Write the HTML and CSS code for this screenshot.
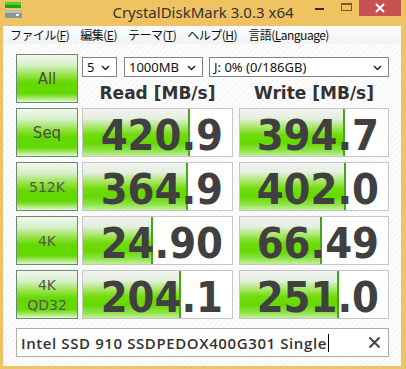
FILE: index.html
```html
<!DOCTYPE html>
<html lang="ja">
<head>
    <meta charset="UTF-8">
    <meta name="viewport" content="width=device-width, initial-scale=1.0">
    <title>CrystalDiskMark 3.0.3 x64</title>
    <link rel="stylesheet" href="styles.css">
</head>
<body>
    <div class="window">
        <header class="titlebar">
            <svg class="app-icon" width="17" height="16" viewBox="0 0 17 16">
                <rect x="0" y="0" width="16" height="3" fill="#4fcf2a"/>
                <rect x="0" y="3" width="16" height="3" fill="#2a9a1a"/>
                <rect x="0" y="8" width="17" height="8" rx="1" fill="#8c9499"/>
                <rect x="0" y="8" width="17" height="3" fill="#b7bec2"/>
                <rect x="11" y="12" width="3" height="2" fill="#ffffff"/>
            </svg>
            <div class="title">CrystalDiskMark 3.0.3 x64</div>
            <div class="controls">
                <span class="ctl-min"></span>
                <span class="ctl-max"></span>
                <span class="ctl-close">
                    <svg width="10" height="10" viewBox="0 0 10 10">
                        <path d="M1 1 L9 9 M9 1 L1 9" stroke="#fff" stroke-width="2"/>
                    </svg>
                </span>
            </div>
        </header>

        <div class="frame">
            <nav class="menubar">
                <span>ファイル(<u>F</u>)</span>
                <span>編集(<u>E</u>)</span>
                <span>テーマ(<u>T</u>)</span>
                <span>ヘルプ(<u>H</u>)</span>
                <span>言語(<u>L</u>anguage)</span>
            </nav>

            <main class="panel">
                <div class="grid">
                    <div class="test-btn casual">All</div>
                    <div class="top-right">
                        <div class="selects">
                            <div class="select sel-count">5<svg class="chev" width="9" height="6" viewBox="0 0 9 6"><path d="M1 1 L4.5 4.5 L8 1" fill="none" stroke="#222" stroke-width="1.5"/></svg></div>
                            <div class="select sel-size">1000MB<svg class="chev" width="9" height="6" viewBox="0 0 9 6"><path d="M1 1 L4.5 4.5 L8 1" fill="none" stroke="#222" stroke-width="1.5"/></svg></div>
                            <div class="select sel-drive">J: 0% (0/186GB)<svg class="chev" width="9" height="6" viewBox="0 0 9 6"><path d="M1 1 L4.5 4.5 L8 1" fill="none" stroke="#222" stroke-width="1.5"/></svg></div>
                        </div>
                        <div class="heads">
                            <div>Read [MB/s]</div>
                            <div>Write [MB/s]</div>
                        </div>
                    </div>

                    <div class="test-btn casual">Seq</div>
                    <div class="cell"><span class="fill" style="width:107px"></span><span class="val">420.9</span></div>
                    <div class="cell write"><span class="fill" style="width:105px"></span><span class="val">394.7</span></div>

                    <div class="test-btn">512K</div>
                    <div class="cell"><span class="fill" style="width:105px"></span><span class="val">364.9</span></div>
                    <div class="cell write"><span class="fill" style="width:106px"></span><span class="val">402.0</span></div>

                    <div class="test-btn">4K</div>
                    <div class="cell"><span class="fill" style="width:70px"></span><span class="val">24.90</span></div>
                    <div class="cell write"><span class="fill" style="width:82px"></span><span class="val">66.49</span></div>

                    <div class="test-btn two-line">4K<br>QD32</div>
                    <div class="cell"><span class="fill" style="width:98px"></span><span class="val">204.1</span></div>
                    <div class="cell write"><span class="fill" style="width:99px"></span><span class="val">251.0</span></div>
                </div>

                <div class="comment">
                    <span class="comment-text">Intel SSD 910 SSDPEDOX400G301 Single</span><span class="caret"></span>
                    <svg class="clear" width="13" height="13" viewBox="0 0 13 13">
                        <path d="M1.5 1.5 L11.5 11.5 M11.5 1.5 L1.5 11.5" stroke="#444" stroke-width="2"/>
                    </svg>
                </div>
            </main>
        </div>
    </div>
</body>
</html>
```

FILE: styles.css
```css
*,
*::after,
*::before{
    box-sizing: border-box;
    margin: 0;
    padding: 0;
}
body{
    width: 406px;
    height: 369px;
    overflow: hidden;
    font-family: "Noto Sans", "DejaVu Sans", sans-serif;
}
.window{
    display: flex;
    flex-direction: column;
    width: 406px;
    height: 369px;
    background-color: #efc262;
}

/* barra de titulo */
.titlebar{
    display: grid;
    grid-template-columns: 1fr auto 1fr;
    height: 26px;
    color: #333;
}
.app-icon{
    margin: 2px 0 0 5px;
}
.title{
    font-size: 15px;
    line-height: 24px;
}
.controls{
    display: flex;
    align-items: flex-start;
    justify-self: end;
    margin-right: 5px;
}
.ctl-min{
    width: 9px;
    height: 2px;
    margin: 8px 17px 0 0;
    background-color: #2b2b2b;
}
.ctl-max{
    width: 11px;
    height: 8px;
    margin: 3px 7px 0 0;
    border: 1px solid #6e5d3c;
    border-top-width: 2px;
}
.ctl-close{
    display: flex;
    align-items: center;
    justify-content: center;
    width: 42px;
    height: 16px;
    background-color: #c75050;
}

.frame{
    display: flex;
    flex-direction: column;
    flex-grow: 1;
    margin: 0 5px 3px 3px;
}
.menubar{
    display: flex;
    gap: 11px;
    height: 18px;
    padding-left: 7px;
    background: linear-gradient(#fbfcfd, #f1f3f5);
    font-family: "Noto Sans CJK JP", sans-serif;
    font-size: 12px;
    line-height: 18px;
    letter-spacing: -0.5px;
    color: #111;
}
.menubar u{
    text-underline-offset: 1px;
}

/* area principal con rayado */
.panel{
    flex-grow: 1;
    padding: 10px 0 0 13px;
    background: repeating-linear-gradient(-45deg, #f4f4f4 0 1px, #fcfcfc 1px 4px);
}
.grid{
    display: grid;
    grid-template-columns: 62px 151px 152px;
    grid-auto-rows: 49px;
    column-gap: 4px;
    row-gap: 5px;
}
.test-btn{
    display: flex;
    align-items: center;
    justify-content: center;
    border: 1px solid #6e8a6e;
    background: linear-gradient(#f3f7f1 0%, #d6efc9 22%, #8ee23a 45%, #62d800 60%, #66d906 82%, #a6ea6a 92%, #e2f7d4 100%);
    font-family: "DejaVu Sans", sans-serif;
    font-size: 14px;
    color: #555;
    text-align: center;
}
.casual{
    font-size: 15px;
    color: #4d4d4d;
}
.two-line{
    line-height: 20px;
}

.top-right{
    grid-column: 2 / 4;
}
.selects{
    display: flex;
    margin-top: 3px;
    gap: 7px;
}
.select{
    display: flex;
    align-items: center;
    justify-content: space-between;
    height: 20px;
    padding: 0 6px 0 4px;
    border: 1px solid #838383;
    background-color: #fff;
    font-size: 13px;
    color: #111;
}
.sel-count{ width: 35px; }
.sel-size{ width: 79px; }
.sel-drive{ width: 180px; margin-left: -1px; }
.chev{
    margin-top: 1px;
}
.heads{
    display: grid;
    grid-template-columns: 151px 152px;
    column-gap: 4px;
    margin-top: 6px;
    font-family: "DejaVu Sans", sans-serif;
    font-weight: bold;
    font-size: 17px;
    line-height: 20px;
    color: #333;
    text-align: center;
}
.heads div:last-child{
    padding-left: 2px;
}

/* celdas de resultados */
.cell{
    position: relative;
    display: flex;
    justify-content: flex-end;
    padding: 5px 9px 0 0;
    border: 1px solid #c6c6c6;
    background-color: #fff;
}
.cell.write{
    width: 150px;
    justify-self: end;
}
.fill{
    position: absolute;
    left: 0;
    top: 0;
    bottom: 0;
    border-right: 2px solid #48a41a;
    background: linear-gradient(#f2f2f2 0%, #e6efe0 20%, #a4e660 40%, #72dc10 54%, #66d800 72%, #8ce446 88%, #c4f09c 100%);
}
.val{
    position: relative;
    font-family: "DejaVu Sans Condensed", "DejaVu Sans", sans-serif;
    font-stretch: condensed;
    font-weight: bold;
    font-size: 43px;
    line-height: 43px;
    color: #404040;
}

.comment{
    display: flex;
    align-items: center;
    width: 373px;
    height: 29px;
    margin-top: 9px;
    padding-left: 4px;
    border: 1px solid #acacac;
    background-color: #fff;
}
.comment-text{
    font-family: "Open Sans", sans-serif;
    font-weight: 600;
    font-size: 15px;
    letter-spacing: 0.6px;
    color: #333;
}
.caret{
    width: 1px;
    height: 18px;
    margin-left: 1px;
    background-color: #000;
}
.clear{
    margin-left: auto;
    margin-right: 7px;
}
```
